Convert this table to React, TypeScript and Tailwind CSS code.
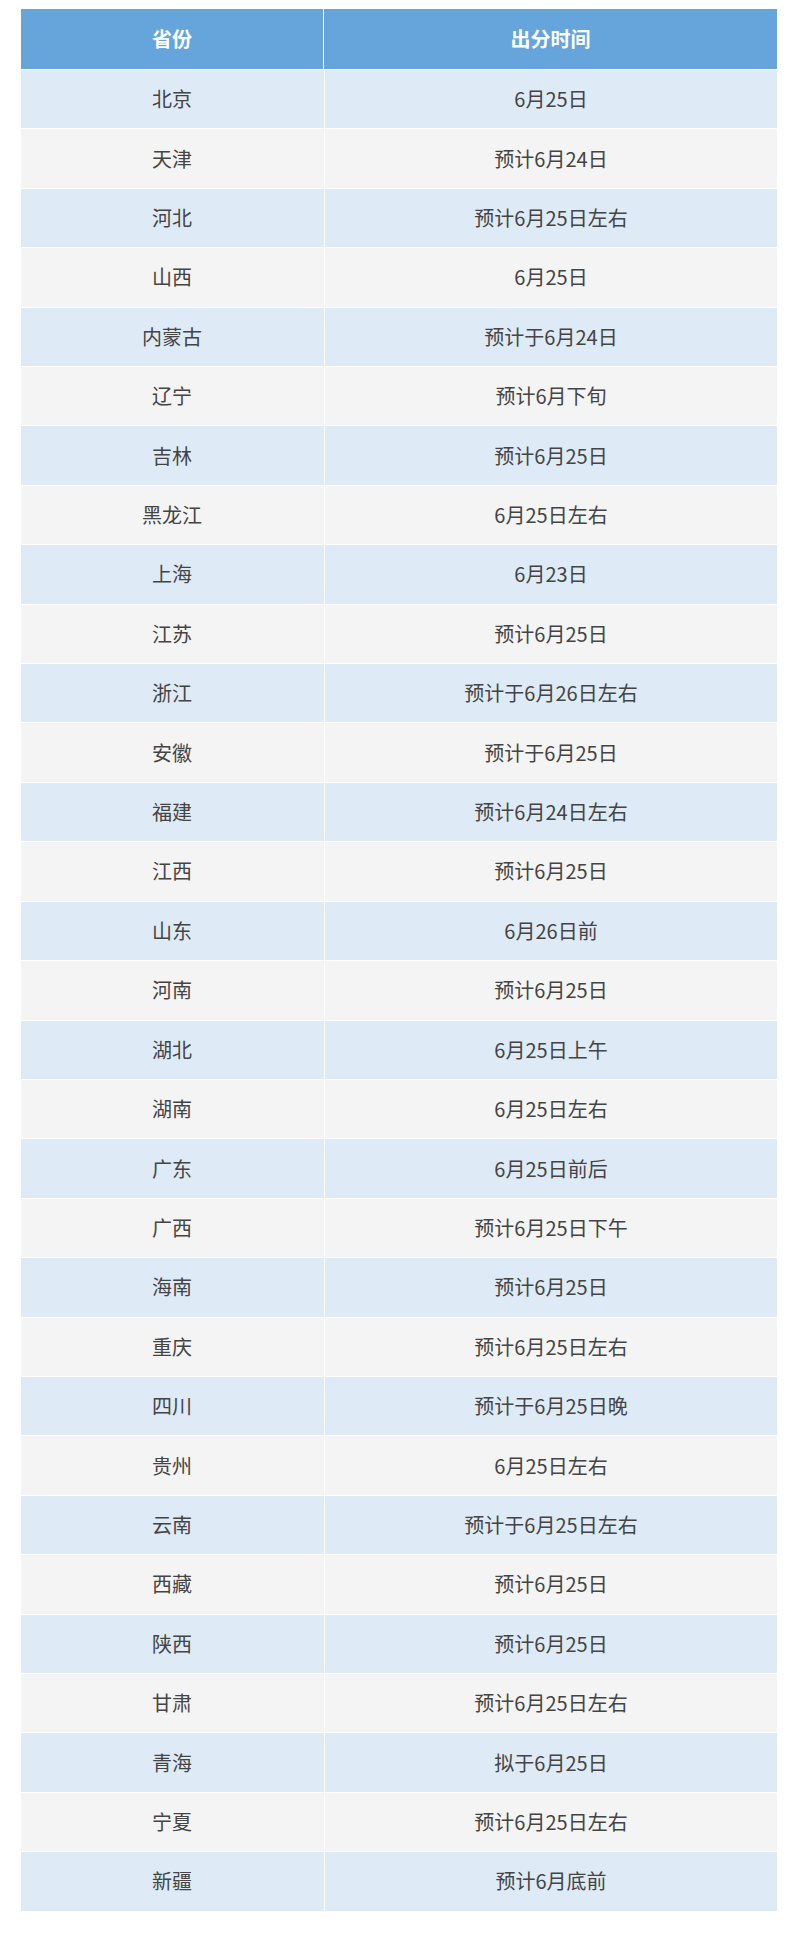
const rows: [string, string][] = [
  ['北京', '6月25日'],
  ['天津', '预计6月24日'],
  ['河北', '预计6月25日左右'],
  ['山西', '6月25日'],
  ['内蒙古', '预计于6月24日'],
  ['辽宁', '预计6月下旬'],
  ['吉林', '预计6月25日'],
  ['黑龙江', '6月25日左右'],
  ['上海', '6月23日'],
  ['江苏', '预计6月25日'],
  ['浙江', '预计于6月26日左右'],
  ['安徽', '预计于6月25日'],
  ['福建', '预计6月24日左右'],
  ['江西', '预计6月25日'],
  ['山东', '6月26日前'],
  ['河南', '预计6月25日'],
  ['湖北', '6月25日上午'],
  ['湖南', '6月25日左右'],
  ['广东', '6月25日前后'],
  ['广西', '预计6月25日下午'],
  ['海南', '预计6月25日'],
  ['重庆', '预计6月25日左右'],
  ['四川', '预计于6月25日晚'],
  ['贵州', '6月25日左右'],
  ['云南', '预计于6月25日左右'],
  ['西藏', '预计6月25日'],
  ['陕西', '预计6月25日'],
  ['甘肃', '预计6月25日左右'],
  ['青海', '拟于6月25日'],
  ['宁夏', '预计6月25日左右'],
  ['新疆', '预计6月底前'],
];

export default function App() {
  return (
    <div
      className="min-h-[1937px] bg-white pl-[21px] pt-[9px]"
      style={{ fontFamily: '"Noto Sans CJK SC", "Noto Sans", sans-serif' }}
    >
      <div className="flex w-[756px] flex-col gap-px bg-white">
        <div className="grid h-[60px] grid-cols-[302px_453px] gap-px text-[20px] font-bold text-white">
          <div className="flex items-center justify-center bg-[#65a5db]">省份</div>
          <div className="flex items-center justify-center bg-[#65a5db]">出分时间</div>
        </div>

        {rows.map(([prov, time], i) => (
          <div
            key={prov}
            className={`grid h-[58.42px] grid-cols-[302px_453px] gap-px text-[20px] text-[#444444] ${
              i % 2 === 0 ? 'bg-[#deebf7]' : 'bg-[#f4f4f4]'
            }`}
          >
            <div className="flex items-center justify-center">{prov}</div>
            <div className="flex items-center justify-center border-l border-white">{time}</div>
          </div>
        ))}
      </div>
    </div>
  );
}
